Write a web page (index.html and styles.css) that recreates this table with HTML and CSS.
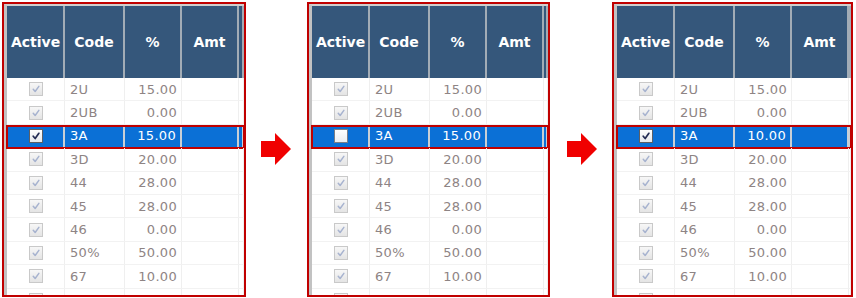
FILE: index.html
```html
<!DOCTYPE html>
<html>
<head>
<meta charset="utf-8">
<link rel="stylesheet" href="styles.css">
</head>
<body>
<div class="strip">
  <div class="panel p1">
    <div class="frame">
      <div class="row head"><div class="c">Active</div><div class="c">Code</div><div class="c">%</div><div class="c">Amt</div><div class="c"></div></div>
      <div class="row"><div class="c cb"><span class="box dis"><svg viewBox="0 0 13 13"><path d="M3.5 6.8 L5.6 9.2 L9.6 3.6"/></svg></span></div><div class="c code">2U</div><div class="c pct">15.00</div><div class="c"></div><div class="c"></div></div>
      <div class="row"><div class="c cb"><span class="box dis"><svg viewBox="0 0 13 13"><path d="M3.5 6.8 L5.6 9.2 L9.6 3.6"/></svg></span></div><div class="c code">2UB</div><div class="c pct">0.00</div><div class="c"></div><div class="c"></div></div>
      <div class="row sel"><div class="c cb"><span class="box on"><svg viewBox="0 0 13 13"><path d="M3.5 6.8 L5.6 9.2 L9.6 3.6"/></svg></span></div><div class="c code">3A</div><div class="c pct">15.00</div><div class="c"></div><div class="c"></div></div>
      <div class="row"><div class="c cb"><span class="box dis"><svg viewBox="0 0 13 13"><path d="M3.5 6.8 L5.6 9.2 L9.6 3.6"/></svg></span></div><div class="c code">3D</div><div class="c pct">20.00</div><div class="c"></div><div class="c"></div></div>
      <div class="row"><div class="c cb"><span class="box dis"><svg viewBox="0 0 13 13"><path d="M3.5 6.8 L5.6 9.2 L9.6 3.6"/></svg></span></div><div class="c code">44</div><div class="c pct">28.00</div><div class="c"></div><div class="c"></div></div>
      <div class="row"><div class="c cb"><span class="box dis"><svg viewBox="0 0 13 13"><path d="M3.5 6.8 L5.6 9.2 L9.6 3.6"/></svg></span></div><div class="c code">45</div><div class="c pct">28.00</div><div class="c"></div><div class="c"></div></div>
      <div class="row"><div class="c cb"><span class="box dis"><svg viewBox="0 0 13 13"><path d="M3.5 6.8 L5.6 9.2 L9.6 3.6"/></svg></span></div><div class="c code">46</div><div class="c pct">0.00</div><div class="c"></div><div class="c"></div></div>
      <div class="row"><div class="c cb"><span class="box dis"><svg viewBox="0 0 13 13"><path d="M3.5 6.8 L5.6 9.2 L9.6 3.6"/></svg></span></div><div class="c code">50%</div><div class="c pct">50.00</div><div class="c"></div><div class="c"></div></div>
      <div class="row"><div class="c cb"><span class="box dis"><svg viewBox="0 0 13 13"><path d="M3.5 6.8 L5.6 9.2 L9.6 3.6"/></svg></span></div><div class="c code">67</div><div class="c pct">10.00</div><div class="c"></div><div class="c"></div></div>
      <div class="row"><div class="c cb"><span class="box dis"><svg viewBox="0 0 13 13"><path d="M3.5 6.8 L5.6 9.2 L9.6 3.6"/></svg></span></div><div class="c code"></div><div class="c pct"></div><div class="c"></div><div class="c"></div></div>
    </div>
  </div>

  <svg class="arrow" viewBox="0 0 30 32"><polygon points="0,8 14,8 14,0 30,16 14,32 14,24 0,24"/></svg>

  <div class="panel p2">
    <div class="frame">
      <div class="row head"><div class="c">Active</div><div class="c">Code</div><div class="c">%</div><div class="c">Amt</div><div class="c"></div></div>
      <div class="row"><div class="c cb"><span class="box dis"><svg viewBox="0 0 13 13"><path d="M3.5 6.8 L5.6 9.2 L9.6 3.6"/></svg></span></div><div class="c code">2U</div><div class="c pct">15.00</div><div class="c"></div><div class="c"></div></div>
      <div class="row"><div class="c cb"><span class="box dis"><svg viewBox="0 0 13 13"><path d="M3.5 6.8 L5.6 9.2 L9.6 3.6"/></svg></span></div><div class="c code">2UB</div><div class="c pct">0.00</div><div class="c"></div><div class="c"></div></div>
      <div class="row sel"><div class="c cb"><span class="box off"></span></div><div class="c code">3A</div><div class="c pct">15.00</div><div class="c"></div><div class="c"></div></div>
      <div class="row"><div class="c cb"><span class="box dis"><svg viewBox="0 0 13 13"><path d="M3.5 6.8 L5.6 9.2 L9.6 3.6"/></svg></span></div><div class="c code">3D</div><div class="c pct">20.00</div><div class="c"></div><div class="c"></div></div>
      <div class="row"><div class="c cb"><span class="box dis"><svg viewBox="0 0 13 13"><path d="M3.5 6.8 L5.6 9.2 L9.6 3.6"/></svg></span></div><div class="c code">44</div><div class="c pct">28.00</div><div class="c"></div><div class="c"></div></div>
      <div class="row"><div class="c cb"><span class="box dis"><svg viewBox="0 0 13 13"><path d="M3.5 6.8 L5.6 9.2 L9.6 3.6"/></svg></span></div><div class="c code">45</div><div class="c pct">28.00</div><div class="c"></div><div class="c"></div></div>
      <div class="row"><div class="c cb"><span class="box dis"><svg viewBox="0 0 13 13"><path d="M3.5 6.8 L5.6 9.2 L9.6 3.6"/></svg></span></div><div class="c code">46</div><div class="c pct">0.00</div><div class="c"></div><div class="c"></div></div>
      <div class="row"><div class="c cb"><span class="box dis"><svg viewBox="0 0 13 13"><path d="M3.5 6.8 L5.6 9.2 L9.6 3.6"/></svg></span></div><div class="c code">50%</div><div class="c pct">50.00</div><div class="c"></div><div class="c"></div></div>
      <div class="row"><div class="c cb"><span class="box dis"><svg viewBox="0 0 13 13"><path d="M3.5 6.8 L5.6 9.2 L9.6 3.6"/></svg></span></div><div class="c code">67</div><div class="c pct">10.00</div><div class="c"></div><div class="c"></div></div>
      <div class="row"><div class="c cb"><span class="box dis"><svg viewBox="0 0 13 13"><path d="M3.5 6.8 L5.6 9.2 L9.6 3.6"/></svg></span></div><div class="c code"></div><div class="c pct"></div><div class="c"></div><div class="c"></div></div>
    </div>
  </div>

  <svg class="arrow a2" viewBox="0 0 30 32"><polygon points="0,8 14,8 14,0 30,16 14,32 14,24 0,24"/></svg>

  <div class="panel p3">
    <div class="frame">
      <div class="row head"><div class="c">Active</div><div class="c">Code</div><div class="c">%</div><div class="c">Amt</div><div class="c"></div></div>
      <div class="row"><div class="c cb"><span class="box dis"><svg viewBox="0 0 13 13"><path d="M3.5 6.8 L5.6 9.2 L9.6 3.6"/></svg></span></div><div class="c code">2U</div><div class="c pct">15.00</div><div class="c"></div><div class="c"></div></div>
      <div class="row"><div class="c cb"><span class="box dis"><svg viewBox="0 0 13 13"><path d="M3.5 6.8 L5.6 9.2 L9.6 3.6"/></svg></span></div><div class="c code">2UB</div><div class="c pct">0.00</div><div class="c"></div><div class="c"></div></div>
      <div class="row sel"><div class="c cb"><span class="box on"><svg viewBox="0 0 13 13"><path d="M3.5 6.8 L5.6 9.2 L9.6 3.6"/></svg></span></div><div class="c code">3A</div><div class="c pct">10.00</div><div class="c"></div><div class="c"></div></div>
      <div class="row"><div class="c cb"><span class="box dis"><svg viewBox="0 0 13 13"><path d="M3.5 6.8 L5.6 9.2 L9.6 3.6"/></svg></span></div><div class="c code">3D</div><div class="c pct">20.00</div><div class="c"></div><div class="c"></div></div>
      <div class="row"><div class="c cb"><span class="box dis"><svg viewBox="0 0 13 13"><path d="M3.5 6.8 L5.6 9.2 L9.6 3.6"/></svg></span></div><div class="c code">44</div><div class="c pct">28.00</div><div class="c"></div><div class="c"></div></div>
      <div class="row"><div class="c cb"><span class="box dis"><svg viewBox="0 0 13 13"><path d="M3.5 6.8 L5.6 9.2 L9.6 3.6"/></svg></span></div><div class="c code">45</div><div class="c pct">28.00</div><div class="c"></div><div class="c"></div></div>
      <div class="row"><div class="c cb"><span class="box dis"><svg viewBox="0 0 13 13"><path d="M3.5 6.8 L5.6 9.2 L9.6 3.6"/></svg></span></div><div class="c code">46</div><div class="c pct">0.00</div><div class="c"></div><div class="c"></div></div>
      <div class="row"><div class="c cb"><span class="box dis"><svg viewBox="0 0 13 13"><path d="M3.5 6.8 L5.6 9.2 L9.6 3.6"/></svg></span></div><div class="c code">50%</div><div class="c pct">50.00</div><div class="c"></div><div class="c"></div></div>
      <div class="row"><div class="c cb"><span class="box dis"><svg viewBox="0 0 13 13"><path d="M3.5 6.8 L5.6 9.2 L9.6 3.6"/></svg></span></div><div class="c code">67</div><div class="c pct">10.00</div><div class="c"></div><div class="c"></div></div>
      <div class="row"><div class="c cb"><span class="box dis"><svg viewBox="0 0 13 13"><path d="M3.5 6.8 L5.6 9.2 L9.6 3.6"/></svg></span></div><div class="c code"></div><div class="c pct"></div><div class="c"></div><div class="c"></div></div>
    </div>
  </div>
</div>
</body>
</html>
```

FILE: styles.css
```css
html, body {
  margin: 0;
  padding: 0;
  background: #ffffff;
}
body {
  font-family: "DejaVu Sans", Verdana, sans-serif;
}
.strip {
  display: flex;
  align-items: flex-start;
  padding-top: 2px;
  padding-left: 2px;
}
.panel {
  box-sizing: border-box;
  height: 295px;
  border: 2px solid #c00000;
  overflow: hidden;
  background: #fff;
}
.p1 { width: 244px; }
.p2 { width: 243px; margin-left: 16px; }
.p3 { width: 241px; margin-left: 15px; }
.arrow {
  width: 30px;
  height: 32px;
  margin-left: 15px;
  margin-top: 131px;
  flex: none;
}
.arrow.a2 { margin-left: 17px; }
.arrow polygon { fill: #f00000; }

.frame {
  border-left: 3px solid #c2c2c2;
  border-top: 2px solid #cfcfcf;
  height: 100%;
}
.row {
  display: grid;
  grid-template-columns: 58px 60px 57px 57px 1fr;
  height: 23.4px;
  position: relative;
}
.row .c {
  box-sizing: border-box;
  border-right: 1px solid #efefef;
  border-bottom: 1px solid #f2f2f2;
  font-size: 13px;
  letter-spacing: 0.3px;
  color: #8e8484;
  display: flex;
  align-items: center;
  white-space: nowrap;
}
.row.head {
  height: 72px;
  background: #35577b;
}
.row.head .c {
  border-right: 2px solid #a2acb6;
  border-bottom: none;
  color: #ffffff;
  font-weight: bold;
  font-size: 14px;
  letter-spacing: 0;
  justify-content: center;
}
.row.head .c:first-child { padding-left: 1px; }
.row .code { padding-left: 5px; }
.row .pct { justify-content: flex-end; padding-right: 4px; }
.row .cb { justify-content: center; padding-left: 1px; }

.row.sel { background: #0b70d6; }
.row.sel .c {
  color: #ffffff;
  border-right: 2px solid #c9cfd6;
  border-bottom-color: #0b70d6;
}
.row.sel::after {
  content: "";
  position: absolute;
  top: 0;
  bottom: -1px;
  left: -1px;
  right: -1px;
  border: 2px solid #c00000;
  pointer-events: none;
}

.box {
  box-sizing: border-box;
  width: 14px;
  height: 14px;
  border: 1px solid #c9c9c9;
  background: linear-gradient(#f7f7f7, #e4e4e4);
  display: block;
}
.box svg { width: 12px; height: 12px; display: block; }
.box svg path {
  fill: none;
  stroke: #a7b3cf;
  stroke-width: 1.6;
  stroke-linecap: round;
  stroke-linejoin: round;
}
.box.on {
  border-color: #5c5f66;
  background: linear-gradient(#ffffff, #e6e8ec);
}
.box.on svg path { stroke: #252d55; stroke-width: 1.9; }
.box.off {
  border-color: #7a7f88;
  background: linear-gradient(#ffffff, #eceef1);
}
```
